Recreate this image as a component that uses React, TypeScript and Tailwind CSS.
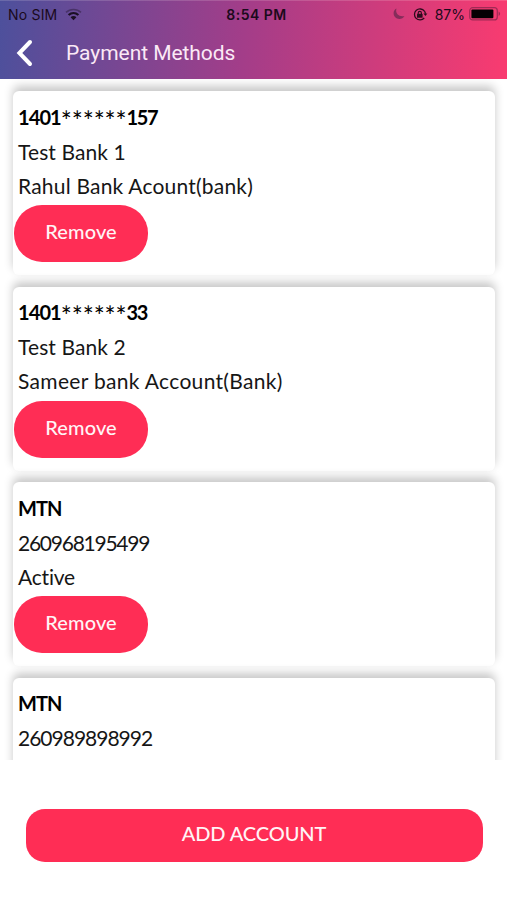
import React from "react";
import { clsx } from "clsx";

const accounts = [
  {
    title: ["1401", "******", "157"],
    line1: "Test Bank 1",
    line2: "Rahul Bank Acount(bank)",
    tracking1: "tracking-[0.1px]",
    tracking2: "tracking-[0.2px]",
  },
  {
    title: ["1401", "******", "33"],
    line1: "Test Bank 2",
    line2: "Sameer bank Account(Bank)",
    tracking1: "tracking-[0.1px]",
    tracking2: "tracking-[0.32px]",
  },
  {
    title: ["MTN"],
    line1: "260968195499",
    line2: "Active",
    tracking1: "tracking-[-1.25px]",
    tracking2: "tracking-[-0.2px]",
  },
  {
    title: ["MTN"],
    line1: "260989898992",
    tracking1: "tracking-[-1px]",
  },
];

function WifiIcon() {
  return (
    <svg width="17" height="13" viewBox="0 0 17 13" fill="none" stroke="#1b1024">
      <path d="M1 4.4C5.2 0.5 11.8 0.5 16 4.4" strokeWidth="1.6" opacity="0.4" />
      <path d="M3.6 7C6.5 4.4 10.5 4.4 13.4 7" strokeWidth="2.2" />
      <path d="M5.6 9.2C7.2 7.7 9.8 7.7 11.4 9.2L8.5 12.2Z" fill="#1b1024" stroke="none" />
    </svg>
  );
}

function MoonIcon() {
  return (
    <svg width="12" height="12" viewBox="0 0 12 12" fill="#6b2850" opacity="0.75">
      <path d="M3.4 0.6C1.6 1.6 0.6 3.3 0.6 5.3C0.6 8.6 3.2 11 6.3 11C8.6 11 10.5 9.8 11.4 8C7 9.5 1.9 6.2 3.4 0.6Z" />
    </svg>
  );
}

function RotationLockIcon() {
  return (
    <svg width="15" height="13" viewBox="0 0 15 13" fill="none" stroke="#2c0c1d">
      <path d="M11.4 3.2A5.5 5.5 0 1 0 11.2 10" strokeWidth="1.3" />
      <path d="M11.4 3.2C12 4 12.3 4.8 12.4 5.8" strokeWidth="1.3" />
      <path d="M10.4 5.4H14.4L12.4 8.1Z" fill="#2c0c1d" stroke="none" />
      <rect x="4" y="5.8" width="5.6" height="4" rx="0.6" fill="#2c0c1d" stroke="none" />
      <path d="M5.2 6V4.9C5.2 2.8 8.4 2.8 8.4 4.9V6" strokeWidth="1.1" />
    </svg>
  );
}

function BatteryIcon() {
  return (
    <svg width="32" height="14" viewBox="0 0 32 14">
      <rect x="0.7" y="0.7" width="27.6" height="12.2" rx="3" fill="none" stroke="#a02a55" strokeWidth="1.2" />
      <rect x="2.4" y="2.4" width="22" height="8.8" rx="1" fill="#050003" />
      <path d="M29.6 4.6C31.6 5.4 31.6 8.2 29.6 9Z" fill="#a02a55" />
    </svg>
  );
}

function StatusBar() {
  return (
    <div className="grid h-[26px] grid-cols-3 items-center pl-[8px] pr-[6px] text-[#1b0a1c]">
      <div className="flex items-center gap-[8px]">
        <span className="text-[14px] tracking-[0.2px]">No SIM</span>
        <WifiIcon />
      </div>
      <span className="pl-[4px] text-center text-[14px] font-semibold tracking-[0.5px]">8:54 PM</span>
      <div className="flex items-center justify-end">
        <MoonIcon />
        <span className="ml-[8px]">
          <RotationLockIcon />
        </span>
        <span className="ml-[7px] mr-[4px] text-[14px]">87%</span>
        <BatteryIcon />
      </div>
    </div>
  );
}

function Header() {
  return (
    <header className="h-[79px] shrink-0 border-t border-white/15 bg-[linear-gradient(94deg,#4d509c_0%,#a33d89_48%,#f93b70_100%)] font-['Inter',sans-serif]">
      <StatusBar />
      <div className="flex h-[52px] items-center pl-[16px]">
        <button type="button" aria-label="Back">
          <svg width="18" height="28" viewBox="0 0 18 28" fill="none" stroke="white" strokeWidth="4" strokeLinecap="round">
            <path d="M14 3L3.4 14L14 25" />
          </svg>
        </button>
        <h1 className="ml-[32px] pt-[1px] font-['Roboto',sans-serif] text-[21px] tracking-[-0.05px] text-[#fbe9f6]">
          Payment Methods
        </h1>
      </div>
    </header>
  );
}

function AccountCard({ account }: { account: (typeof accounts)[number] }) {
  const [start, stars, end] = account.title;

  return (
    <div className="h-[184px] shrink-0 rounded-[6px] bg-white pl-[5px] pt-[8px] text-[21px] text-[#161616] shadow-[0_-5px_10px_0px_rgba(0,0,0,0.22)]">
      <h2 className="flex h-[35px] items-center text-[20px] font-bold text-black">
        <span className="tracking-[-0.9px]">{start}</span>
        {stars && <span className="h-[18px] text-[26px] leading-[26px] font-normal tracking-[-0.1px]">{stars}</span>}
        {end && <span className="tracking-[-1.3px]">{end}</span>}
      </h2>
      <p className={clsx("flex h-[35px] items-center", account.tracking1)}>{account.line1}</p>
      {account.line2 && (
        <>
          <p className={clsx("flex h-[33px] items-center", account.tracking2)}>{account.line2}</p>
          <button
            type="button"
            className="-ml-[4px] mt-[3px] h-[57px] w-[134px] rounded-[28px] bg-[#ff2d55] pb-[5px] text-[20px] font-medium tracking-[0.15px] text-[#fff4f6]"
          >
            Remove
          </button>
        </>
      )}
    </div>
  );
}

export default function App() {
  return (
    <div className="flex h-[900px] w-full flex-col overflow-hidden bg-white font-['Lato',sans-serif]">
      <Header />
      <div className="flex h-[681px] shrink-0 flex-col gap-[11.5px] overflow-hidden pl-[13px] pr-[12px] pt-[12px]">
        {accounts.map((account, i) => (
          <AccountCard key={i} account={account} />
        ))}
      </div>
      <div className="pl-[25.5px] pr-[24.5px] pt-[48.5px]">
        <button
          type="button"
          className="h-[53.5px] w-full rounded-[19px] bg-[#ff2d55] pb-[5px] text-[20px] font-medium tracking-[-0.1px] text-[#fff4f6]"
        >
          ADD ACCOUNT
        </button>
      </div>
    </div>
  );
}
